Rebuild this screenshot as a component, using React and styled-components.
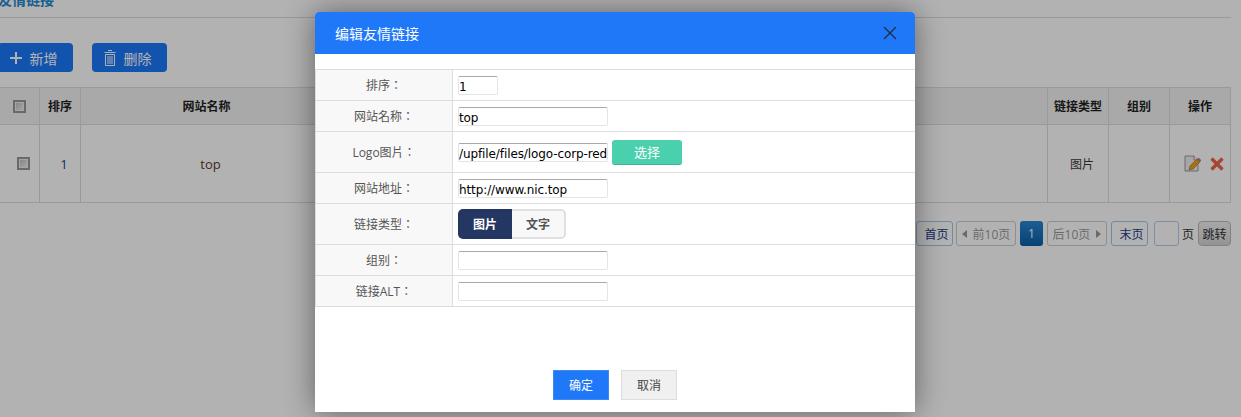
import React from 'react'
import styled, { createGlobalStyle } from 'styled-components'
import { X } from 'lucide-react'

const FONT = '"Open Sans", "Noto Sans CJK SC", sans-serif'

const GlobalStyle = createGlobalStyle`
  html, body { margin: 0; padding: 0; background: #fff; }
  body { font-family: ${FONT}; font-size: 12px; color: #333; overflow: hidden; }
`

const Page = styled.div`
  width: 1241px;
  height: 417px;
  overflow: hidden;
  position: relative;
  box-sizing: border-box;
  padding-right: 10px;
`
const TitleBar = styled.div`
  height: 17px;
  margin-top: -9px;
  padding-bottom: 9px;
  box-sizing: content-box;
  border-bottom: 1px solid #ddd;
  font-size: 14px;
  font-weight: 700;
  line-height: 17px;
  color: #2488cc;
  text-indent: -2px;
`
const Toolbar = styled.div`
  display: flex;
  gap: 19px;
  margin: 25px 0 0 -2px;
  height: 44px;
`
const ToolButton = styled.div`
  width: 75px;
  height: 29px;
  box-sizing: border-box;
  padding-right: 4px;
  display: flex;
  align-items: center;
  justify-content: center;
  gap: 8px;
  background: #1b77f9;
  border-radius: 4px;
  color: #fff;
  font-size: 14px;
`
const Grid = styled.div`
  display: grid;
  grid-template-columns: 40px 41px 252px 1fr 61px 61px 61px;
  border-top: 1px solid #ddd;
`
const HeadCell = styled.div`
  height: 36px;
  box-sizing: content-box;
  display: flex;
  align-items: center;
  justify-content: center;
  background: #f3f3f3;
  border: solid #ddd;
  border-width: 0 1px 1px 0;
  font-weight: 700;
  color: #222;
`
const BodyCell = styled.div`
  height: 78px;
  display: flex;
  align-items: center;
  justify-content: center;
  gap: 9px;
  border: solid #ddd;
  border-width: 0 1px 1px 0;
  color: ${(p) => p.$color || '#3a3a3a'};
  font-size: ${(p) => (p.$big ? '13px' : '12px')};
  padding-left: ${(p) => p.$shift || 0}px;
  box-sizing: border-box;
`
const Check = styled.span`
  width: 9px;
  height: 9px;
  border: 2px solid #999;
  outline: 1px solid #eee;
  outline-offset: -3px;
  background: linear-gradient(135deg, #bcbcbc, #f4f4f4);
  display: block;
`
const Pager = styled.div`
  display: flex;
  justify-content: flex-end;
  align-items: center;
  margin-top: 18px;
  height: 25px;
`
const PageBtn = styled.div`
  height: 25px;
  width: ${(p) => p.$w}px;
  margin-left: ${(p) => p.$gap ?? 3}px;
  padding-left: ${(p) => p.$pad || 0}px;
  box-sizing: border-box;
  display: flex;
  align-items: center;
  justify-content: center;
  gap: 6px;
  font-size: 12px;
  border-radius: 3px;
  border: 1px solid ${(p) => (p.$off ? '#ccc' : '#a6c5e6')};
  color: ${(p) => (p.$off ? '#999' : '#1d3a8a')};
`
const Current = styled(PageBtn)`
  border: 0;
  color: #fff;
  background: linear-gradient(#2a86d4, #0a5ea6);
`
const PageInput = styled(PageBtn)`
  border-color: #b8cde3;
`
const PageText = styled.span`
  margin-left: 3px;
  font-size: 12px;
  color: #333;
`
const JumpBtn = styled.div`
  width: 33px;
  height: 25px;
  margin-left: 4px;
  box-sizing: border-box;
  border: 1px solid #bbb;
  border-radius: 4px;
  background: linear-gradient(#f0f0f0, #d4d4d4);
  display: flex;
  align-items: center;
  justify-content: center;
  font-size: 12px;
  color: #333;
  white-space: nowrap;
`
const Arrow = styled.span`
  width: 0;
  height: 0;
  border: 4px solid transparent;
  ${(p) => (p.$right
    ? 'border-left: 5px solid #999; border-right: 0;'
    : 'border-right: 5px solid #999; border-left: 0;')}
`

const Overlay = styled.div`
  position: absolute;
  inset: 0;
  background: rgba(0, 0, 0, 0.3);
  display: flex;
  justify-content: center;
  align-items: flex-start;
  padding: 12px 11px 0 0;
  box-sizing: border-box;
`
const Modal = styled.div`
  width: 600px;
  height: 400px;
  background: #fff;
  border-radius: 4px 4px 0 0;
  box-shadow: 0 0 30px rgba(0, 0, 0, 0.45);
  display: flex;
  flex-direction: column;
  overflow: hidden;
`
const ModalHead = styled.div`
  height: 42px;
  flex: none;
  background: #1e78f8;
  color: #fff;
  font-size: 14px;
  display: flex;
  align-items: center;
  justify-content: space-between;
  padding: 0 14px 0 20px;
`
const Form = styled.div`
  margin-top: 15px;
  border-top: 1px solid #ddd;
  border-left: 1px solid #ddd;
`
const Row = styled.div`
  display: flex;
  height: ${(p) => p.$h || 31}px;
  box-sizing: border-box;
  border-bottom: 1px solid #ddd;
`
const Label = styled.div`
  width: 137px;
  flex: none;
  box-sizing: border-box;
  background: #f8f8f8;
  border-right: 1px solid #ddd;
  display: flex;
  align-items: center;
  justify-content: center;
  color: #555;
  font-family: "Open Sans", "Noto Sans CJK TC", sans-serif;
  font-size: 12px;
`
const Value = styled.div`
  flex: 1;
  display: flex;
  align-items: center;
  gap: 4px;
  padding-left: 5px;
`
const Input = styled.input`
  width: ${(p) => p.$w || 150}px;
  height: 19px;
  box-sizing: border-box;
  padding: 3px 0 0 0;
  border: 1px solid #e2e4ea;
  border-top-color: #a9a9a9;
  border-radius: 2px;
  outline: 0;
  font-family: "DejaVu Sans", sans-serif;
  font-size: 12px;
  letter-spacing: -0.1px;
  color: #000;
  background: #fff;
`
const PickButton = styled.div`
  width: 70px;
  height: 25px;
  box-sizing: border-box;
  background: #4ad0ad;
  border-bottom: 1px solid #3bb596;
  border-radius: 3px;
  color: #fff;
  font-size: 13px;
  display: flex;
  align-items: center;
  justify-content: center;
`
const Toggle = styled.div`
  display: flex;
  height: 30px;
`
const ToggleItem = styled.div`
  width: 54px;
  box-sizing: border-box;
  display: flex;
  align-items: center;
  justify-content: center;
  font-size: 12px;
  font-weight: 700;
  color: ${(p) => (p.$on ? '#fff' : '#555')};
  background: ${(p) => (p.$on ? '#243763' : '#f8f8f8')};
  border: ${(p) => (p.$on ? '0' : '2px solid #e0e0e0')};
  border-left: 0;
  border-radius: ${(p) => (p.$on ? '5px 0 0 5px' : '0 5px 5px 0')};
`
const ModalFoot = styled.div`
  margin-top: auto;
  padding-bottom: 12px;
  display: flex;
  justify-content: center;
  gap: 12px;
`
const FootButton = styled.div`
  width: 56px;
  height: 30px;
  box-sizing: border-box;
  display: flex;
  align-items: center;
  justify-content: center;
  font-size: 12px;
  border: 1px solid ${(p) => (p.$primary ? '#3a8bfa' : '#ddd')};
  background: ${(p) => (p.$primary ? '#1e78f8' : '#f0f0f0')};
  color: ${(p) => (p.$primary ? '#fff' : '#444')};
`

const PlusIcon = () => (
  <svg width="12" height="12" viewBox="0 0 12 12">
    <path d="M6 0v12M0 6h12" stroke="#fff" strokeWidth="2" />
  </svg>
)

const BinIcon = () => (
  <svg width="12" height="17" viewBox="0 0 12 17" fill="none" stroke="#fff" strokeWidth="1">
    <path d="M4 1.5h4M0.5 3.5h11M1.5 5.5h9v11h-9z" />
    <path d="M4 7v8M6 7v8M8 7v8" />
  </svg>
)

const EditIcon = () => (
  <svg width="17" height="17" viewBox="0 0 17 17">
    <path d="M1 1h9l4 4v11H1z" fill="#eee" stroke="#999" />
    <path d="M10 1v4h4" fill="#fff" stroke="#999" />
    <path d="M5 15l1-4 7-7 3 3-7 7z" fill="#f0a020" stroke="#a86a10" strokeWidth="0.6" />
    <path d="M13 4l1.5-1.5 3 3L16 7z" fill="#c070c0" />
  </svg>
)

const DelIcon = () => (
  <svg width="14" height="14" viewBox="0 0 14 14">
    <path d="M1.5 1.5l11 11M12.5 1.5l-11 11" stroke="#f2654a" strokeWidth="3.4" />
  </svg>
)

const App = () => (
  <Page>
    <GlobalStyle />
    <TitleBar>友情链接</TitleBar>
    <Toolbar>
      <ToolButton><PlusIcon />新增</ToolButton>
      <ToolButton><BinIcon />删除</ToolButton>
    </Toolbar>
    <Grid>
      <HeadCell><Check /></HeadCell>
      <HeadCell>排序</HeadCell>
      <HeadCell>网站名称</HeadCell>
      <HeadCell>网站地址</HeadCell>
      <HeadCell>链接类型</HeadCell>
      <HeadCell>组别</HeadCell>
      <HeadCell>操作</HeadCell>
      <BodyCell $shift={7}><Check /></BodyCell>
      <BodyCell $big $color="#1d3a8a" $shift={8}>1</BodyCell>
      <BodyCell $big $color="#5a3a2a" $shift={8}>top</BodyCell>
      <BodyCell>http://www.nic.top</BodyCell>
      <BodyCell $shift={8}>图片</BodyCell>
      <BodyCell />
      <BodyCell $shift={7}><EditIcon /><DelIcon /></BodyCell>
    </Grid>
    <Pager>
      <PageBtn $w={37} $pad={4}>首页</PageBtn>
      <PageBtn $w={60} $off><Arrow />前10页</PageBtn>
      <Current $w={23} $gap={4}>1</Current>
      <PageBtn $w={60} $gap={4} $off>后10页<Arrow $right /></PageBtn>
      <PageBtn $w={37} $gap={4} $pad={4}>末页</PageBtn>
      <PageInput $w={25} $gap={6} />
      <PageText>页</PageText>
      <JumpBtn>跳转</JumpBtn>
    </Pager>
    <Overlay>
      <Modal>
        <ModalHead>
          编辑友情链接
          <X size={22} strokeWidth={1.5} color="#1f2d45" />
        </ModalHead>
        <Form>
          <Row><Label>排序：</Label><Value><Input $w={40} defaultValue="1" /></Value></Row>
          <Row><Label>网站名称：</Label><Value><Input defaultValue="top" /></Value></Row>
          <Row $h={41}>
            <Label>Logo图片：</Label>
            <Value>
              <Input defaultValue="/upfile/files/logo-corp-red" />
              <PickButton>选择</PickButton>
            </Value>
          </Row>
          <Row><Label>网站地址：</Label><Value><Input defaultValue="http://www.nic.top" /></Value></Row>
          <Row $h={41}>
            <Label>链接类型：</Label>
            <Value>
              <Toggle>
                <ToggleItem $on>图片</ToggleItem>
                <ToggleItem>文字</ToggleItem>
              </Toggle>
            </Value>
          </Row>
          <Row><Label>组别：</Label><Value><Input /></Value></Row>
          <Row><Label>链接ALT：</Label><Value><Input /></Value></Row>
        </Form>
        <ModalFoot>
          <FootButton $primary>确定</FootButton>
          <FootButton>取消</FootButton>
        </ModalFoot>
      </Modal>
    </Overlay>
  </Page>
)

export default App
